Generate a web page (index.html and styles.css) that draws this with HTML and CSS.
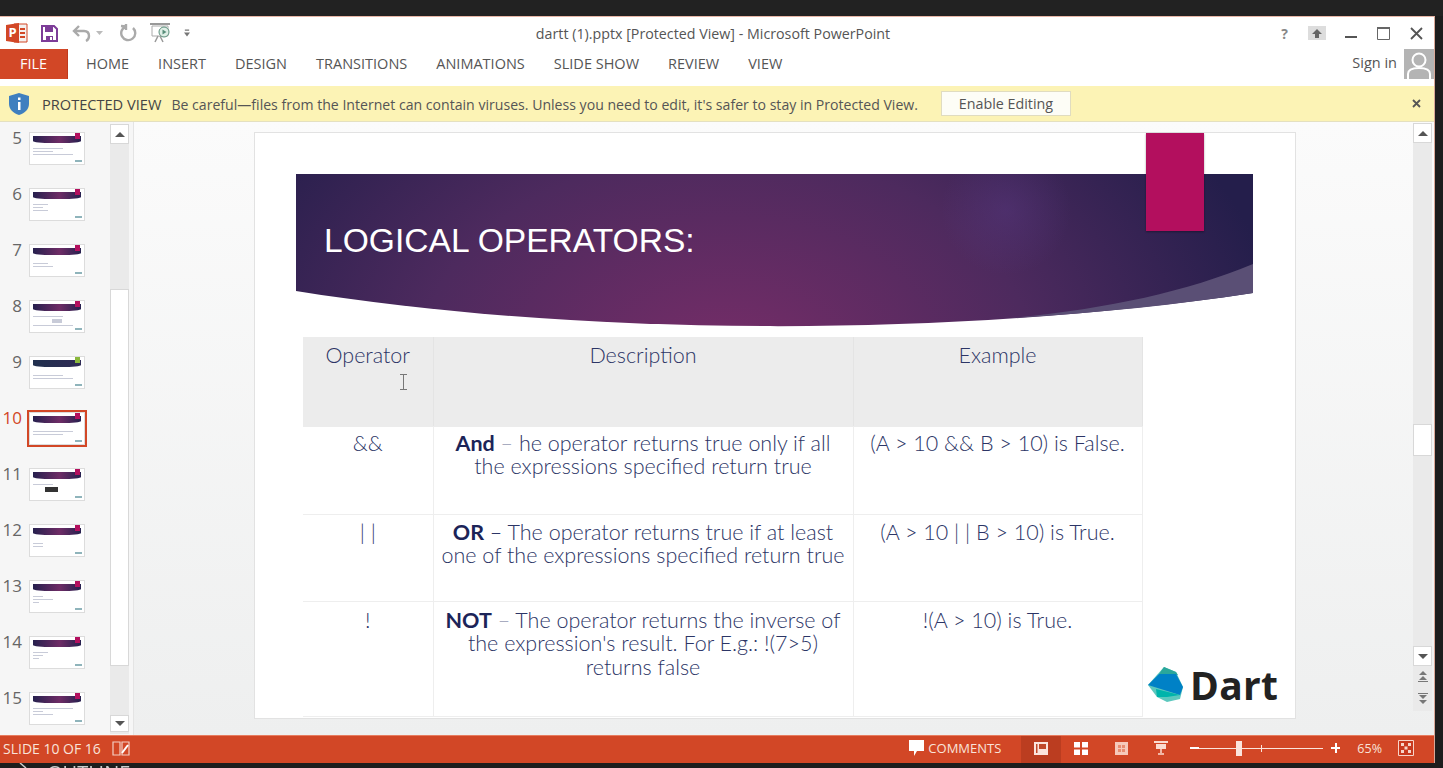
FILE: index.html
```html
<!DOCTYPE html>
<html lang="en">
<head>
  <meta charset="utf-8" />
  <title>dartt (1).pptx [Protected View] - Microsoft PowerPoint</title>
  <link rel="stylesheet" href="styles.css">
</head>
<body>
  <div class="topstrip"></div>
  <div class="window">

    <header class="titlebar">
      <div class="qat">
        <svg class="ppt-logo" width="22" height="20" viewBox="0 0 22 20"><path d="M8 1h13v18H8z" fill="#f4f0ee" stroke="#d24726"/><path d="M14 6h5M14 10h5M14 14h5" stroke="#d24726" stroke-width="2"/><path d="M0 2l13-2v20L0 18z" fill="#d24726"/><text x="2.5" y="14" class="ppt-p">P</text></svg>
        <svg class="save" width="17" height="17" viewBox="0 0 17 17"><path d="M1 1h12l3 3v12H1z" fill="#fff" stroke="#7d3c98" stroke-width="2"/><path d="M4 2h8v5H4z" fill="#7d3c98"/><path d="M5 11h7v5H5z" fill="#7d3c98"/><path d="M9 12h2v3H9z" fill="#fff"/></svg>
        <svg class="undo" width="20" height="17" viewBox="0 0 20 17"><path d="M7 1L2 6l5 5M2 6h10c4 0 5 3 5 5s-1 4-3 5" fill="none" stroke="#aaa" stroke-width="2.4"/></svg>
        <svg class="tiny" width="7" height="4" viewBox="0 0 7 4"><path d="M0 0h7L3.5 4z" fill="#bbb"/></svg>
        <svg class="redo" width="18" height="18" viewBox="0 0 18 18"><path d="M13 4a7 7 0 1 1-7-1.500M6 0v6M6 2.500L1 2" fill="none" stroke="#aaa" stroke-width="2.4"/></svg>
        <svg class="present" width="22" height="20" viewBox="0 0 22 20"><path d="M0 1h20" stroke="#999" stroke-width="2"/><path d="M2 3h16v10H2z" fill="#fff" stroke="#aaa"/><circle cx="14" cy="9" r="5" fill="#dfeee6" stroke="#5a8f7b"/><path d="M12.5 6.500l4 2.500-4 2.500z" fill="#5a8f7b"/><path d="M8 13l-3 6M10 13l3 6" stroke="#999" stroke-width="1.5"/></svg>
        <svg class="more" width="6" height="8" viewBox="0 0 7 8"><path d="M1 0h5v1.500H1zM0 3.500h7L3.500 8z" fill="#777"/></svg>
      </div>
      <div class="doc-title">dartt (1).pptx [Protected View] - Microsoft PowerPoint</div>
      <div class="winctrls">
        <span class="help">?</span>
        <svg class="ribbon-opt" width="18" height="14" viewBox="0 0 18 14"><path d="M0 0h18v14H0z" fill="#ddd"/><path d="M9 3l5 5h-3v4H7V8H4z" fill="#666"/></svg>
        <svg class="ctl-min" width="14" height="14" viewBox="0 0 14 14"><path d="M1 11h12" stroke="#555" stroke-width="2"/></svg>
        <svg class="ctl-max" width="13" height="13" viewBox="0 0 13 13"><path d="M.5 1.500h12v11H.5z" fill="none" stroke="#666"/><path d="M0 1h13" stroke="#666" stroke-width="2"/></svg>
        <svg class="ctl-close" width="13" height="13" viewBox="0 0 13 13"><path d="M1 1l11 11M12 1L1 12" stroke="#555" stroke-width="1.8"/></svg>
      </div>
    </header>

    <nav class="tabs">
      <a class="file-tab">FILE</a>
      <a>HOME</a>
      <a>INSERT</a>
      <a>DESIGN</a>
      <a>TRANSITIONS</a>
      <a>ANIMATIONS</a>
      <a>SLIDE SHOW</a>
      <a>REVIEW</a>
      <a>VIEW</a>
      <div class="account">
        <span>Sign in</span>
        <svg width="30" height="30" viewBox="0 0 30 30"><path d="M0 0h30v30H0z" fill="#b4b4b4"/><circle cx="15" cy="11" r="6.500" fill="#b4b4b4" stroke="#fff" stroke-width="2"/><path d="M4 30v-5c0-5 6-6 11-6s11 1 11 6v5" fill="#b4b4b4" stroke="#fff" stroke-width="2"/></svg>
      </div>
    </nav>

    <div class="infobar">
      <svg class="shield" width="20" height="22" viewBox="0 0 20 22"><path d="M10 0l10 3v8c0 5-4 9-10 11C4 20 0 16 0 11V3z" fill="#3f7fbf"/><path d="M9 4.500h2.500v2.500H9zM9 9h2.500v8H9z" fill="#fff"/></svg>
      <strong>PROTECTED VIEW</strong>
      <span class="info-msg">Be careful—files from the Internet can contain viruses. Unless you need to edit, it's safer to stay in Protected View.</span>
      <button class="enable">Enable Editing</button>
      <svg class="info-close" width="9" height="9" viewBox="0 0 9 9"><path d="M1 1l7 7M8 1L1 8" stroke="#555" stroke-width="1.8"/></svg>
    </div>

    <main class="workspace">
      <aside class="sidebar">
        <ol class="thumbs">
          <li><span class="num">5</span><div class="thumb"><i class="t-band"></i><i class="t-pin"></i><i class="t-line w60"></i><i class="t-line w40"></i><i class="t-line w70"></i><i class="t-logo"></i></div></li>
          <li><span class="num">6</span><div class="thumb"><i class="t-band"></i><i class="t-pin"></i><i class="t-line w30"></i><i class="t-line w20"></i><i class="t-line w30"></i><i class="t-logo"></i></div></li>
          <li><span class="num">7</span><div class="thumb"><i class="t-band"></i><i class="t-pin"></i><i class="t-line w30 gap"></i><i class="t-line w40"></i><i class="t-logo"></i></div></li>
          <li><span class="num">8</span><div class="thumb"><i class="t-band"></i><i class="t-pin"></i><i class="t-line w60"></i><i class="t-line w20 mid"></i><i class="t-line w70"></i><i class="t-logo"></i></div></li>
          <li><span class="num">9</span><div class="thumb"><i class="t-band dark"></i><i class="t-pin green"></i><i class="t-line w60 gap"></i><i class="t-line w70"></i><i class="t-logo"></i></div></li>
          <li class="current"><span class="num">10</span><div class="thumb"><i class="t-band"></i><i class="t-pin"></i><i class="t-line w70 gap"></i><i class="t-line w60"></i><i class="t-logo"></i></div></li>
          <li><span class="num">11</span><div class="thumb"><i class="t-band"></i><i class="t-pin"></i><i class="t-line w40"></i><i class="t-blob"></i><i class="t-logo"></i></div></li>
          <li><span class="num">12</span><div class="thumb"><i class="t-band"></i><i class="t-pin"></i><i class="t-line w20 gap"></i><i class="t-line w20"></i><i class="t-logo"></i></div></li>
          <li><span class="num">13</span><div class="thumb"><i class="t-band"></i><i class="t-pin"></i><i class="t-line w20"></i><i class="t-line w40"></i><i class="t-line w10"></i><i class="t-logo"></i></div></li>
          <li><span class="num">14</span><div class="thumb"><i class="t-band"></i><i class="t-pin"></i><i class="t-line w30"></i><i class="t-line w20"></i><i class="t-line w10"></i><i class="t-logo"></i></div></li>
          <li><span class="num">15</span><div class="thumb"><i class="t-band"></i><i class="t-pin"></i><i class="t-line w70"></i><i class="t-line w20"></i><i class="t-line w40"></i><i class="t-logo"></i></div></li>
        </ol>
        <div class="scrollbar side-scroll">
          <span class="sb-btn"><b class="up"></b></span>
          <span class="sb-track"><span class="sb-thumb"></span></span>
          <span class="sb-btn"><b class="down"></b></span>
        </div>
      </aside>

      <section class="canvas">
        <article class="slide">
          <div class="bookmark"></div>
          <div class="banner">
            <svg width="958" height="154" viewBox="0 0 958 154">
              <defs>
                <radialGradient id="bannerGlow" gradientUnits="userSpaceOnUse" cx="430" cy="190" r="560" gradientTransform="translate(0 60) scale(1 .7)">
                  <stop offset="0" stop-color="#772d68"/>
                  <stop offset=".55" stop-color="#4d2a5e"/>
                  <stop offset="1" stop-color="#241e4b"/>
                </radialGradient>
                <radialGradient id="bannerSpot" gradientUnits="userSpaceOnUse" cx="710" cy="36" r="65">
                  <stop offset="0" stop-color="#5a3a85" stop-opacity=".4"/>
                  <stop offset="1" stop-color="#5a3a85" stop-opacity="0"/>
                </radialGradient>
              </defs>
              <path d="M0 0H957V119C650 165 280 162 0 117Z" fill="url(#bannerGlow)"/>
              <path d="M0 0H957V119C650 165 280 162 0 117Z" fill="url(#bannerSpot)"/>
              <path d="M957 90V119C880 131 800 139 715 144C810 135 890 118 957 90Z" fill="#5a4f75"/>
            </svg>
            <h1>LOGICAL OPERATORS:</h1>
          </div>
          <table class="ops">
            <colgroup><col class="c1"><col class="c2"><col class="c3"></colgroup>
            <thead>
              <tr><th>Operator</th><th>Description</th><th>Example</th></tr>
            </thead>
            <tbody>
              <tr class="r1"><td>&amp;&amp;</td><td><b>And</b> <span class="dash">–</span> he operator returns true only if all the expressions specified return true</td><td>(A &gt; 10 &amp;&amp; B &gt; 10) is False.</td></tr>
              <tr class="r2"><td>| |</td><td><b>OR</b> – The operator returns true if at least one of the expressions specified return true</td><td>(A &gt; 10 | | B &gt; 10) is True.</td></tr>
              <tr class="r3"><td>!</td><td><b>NOT</b> <span class="dash">–</span> The operator returns the inverse of the expression's result. For E.g.: !(7&gt;5) returns false</td><td>!(A &gt; 10) is True.</td></tr>
            </tbody>
          </table>
          <svg class="ibeam" width="7" height="16" viewBox="0 0 7 16"><path d="M0 .5h7M0 15.500h7M3.500 0v16" stroke="#777"/></svg>
          <div class="dart-logo">
            <svg width="36" height="36" viewBox="0 0 36 36"><path d="M0 18L16 0l12 5 7 15-3 12-13 3-10-5z" fill="#5cc8be"/><path d="M11 7L16 0l12 5 2 3z" fill="#2aa79b"/><path d="M0 18L11 7h17l7 13-3 8z" fill="#0081c6"/><path d="M9 30l-1-8 24 6-13 2z" fill="#00b4ab"/></svg>
            <span>Dart</span>
          </div>
        </article>
      </section>

      <div class="scrollbar main-scroll">
        <span class="sb-btn"><b class="up"></b></span>
        <span class="sb-track"><span class="sb-thumb"></span></span>
        <span class="sb-btn"><b class="down"></b></span>
        <span class="sb-page">
          <svg width="10" height="11" viewBox="0 0 10 11"><path d="M5 0l4 4H1zM5 5l4 4H1zM0 10h10v1H0z" fill="#777"/></svg>
          <svg width="10" height="11" viewBox="0 0 10 11"><path d="M0 0h10v1H0zM1 2h8L5 6zM1 7h8l-4 4z" fill="#777"/></svg>
        </span>
      </div>
    </main>

    <footer class="statusbar">
      <span class="slide-count">SLIDE 10 OF 16</span>
      <svg class="notes-ico" width="18" height="15" viewBox="0 0 18 15"><path d="M1 1h7v13H1zM10 1h7v13h-7z" fill="none" stroke="#f3cfc4" stroke-width="1.2"/><path d="M10 12l6-8" stroke="#fff" stroke-width="2"/></svg>
      <div class="status-right">
        <svg class="comment-ico" width="15" height="16" viewBox="0 0 15 16"><path d="M0 0h15v11H8l-3 5v-5H0z" fill="#fff"/></svg>
        <span class="comments">COMMENTS</span>
        <span class="view-btn active"><svg width="14" height="13" viewBox="0 0 14 13"><path d="M0 0h14v13H0z" fill="#fbe4dc"/><path d="M5 2h7v5H5z" fill="#c0492a"/><path d="M2 2h1.500v9H2z" fill="#c0492a"/></svg></span>
        <span class="view-btn"><svg width="14" height="13" viewBox="0 0 14 13"><path d="M0 0h6v5.500H0zM8 0h6v5.500H8zM0 7.500h6V13H0zM8 7.500h6V13H8z" fill="#fff"/></svg></span>
        <span class="view-btn"><svg width="13" height="13" viewBox="0 0 13 13"><path d="M0 0h13v13H0z" fill="#f6c9ba"/><path d="M3 3h3v3H3zM7 7h3v3H7zM7 3h3v3H7zM3 7h3v3H3z" fill="#e88c70"/></svg></span>
        <span class="view-btn"><svg width="14" height="14" viewBox="0 0 14 14"><path d="M0 0h14v2H0zM2 3h10v5H2z" fill="#fbdcd0"/><path d="M7 8v4M4 13h6" stroke="#fbdcd0" stroke-width="1.5"/></svg></span>
        <span class="zoom-sign minus"></span>
        <span class="zoom-slider"><i class="zoom-tick"></i><i class="zoom-thumb"></i></span>
        <span class="zoom-sign plus"></span>
        <span class="zoom-pct">65%</span>
        <svg class="fit-ico" width="16" height="16" viewBox="0 0 16 16"><path d="M.5.500h15v15H.5z" fill="#c93a1e" stroke="#f7d5c9"/><path d="M3 3h3v3H3zM10 3h3v3h-3zM3 10h3v3H3zM10 10h3v3h-3zM6.500 6.500h3v3h-3z" fill="#f7d5c9"/></svg>
      </div>
    </footer>
  </div>
  <div class="underneath">
    <svg width="12" height="5" viewBox="0 0 12 5"><path d="M2 0l6 5" stroke="#ccc" stroke-width="1.5"/></svg>
    <span>OUTLINE</span>
  </div>
</body>
</html>
```

FILE: styles.css
```css
* {
  box-sizing: border-box;
}

html, body {
  height: 768px;
  overflow: hidden;
}

body {
  margin: 0;
  background: #1d1d1d;
  font-family: "Open Sans", "Liberation Sans", sans-serif;
  color: #444;
  filter: blur(0.45px);
}

.topstrip {
  height: 16px;
  background: #222;
}

.window {
  width: 1435px;
  height: 747px;
  display: flex;
  flex-direction: column;
  background: #fff;
  border-top: 1px solid #e8b6a6;
  border-right: 1px solid #d9a898;
}

/* title bar */
.titlebar {
  height: 32px;
  flex: none;
  display: grid;
  grid-template-columns: 1fr auto 1fr;
  align-items: center;
}

.qat {
  display: flex;
  align-items: center;
  padding-left: 6px;
}

.ppt-p {
  font: bold 13px "Open Sans", sans-serif;
  fill: #fff;
}

.save { margin-left: 13px; }
.undo { margin-left: 14px; }
.tiny { margin-left: 4px; }
.redo { margin-left: 17px; }
.present { margin-left: 12px; }
.more { margin-left: 12px; }

.doc-title {
  font-size: 14.25px;
  color: #555;
  padding-right: 8px;
}

.winctrls {
  display: flex;
  align-items: center;
  justify-content: flex-end;
  padding-right: 11px;
}

.help {
  font-size: 14px;
  font-weight: 700;
  color: #888;
  margin-right: 20px;
}

.ribbon-opt { margin-right: 18px; }
.ctl-min { margin-right: 19px; }
.ctl-max { margin-right: 20px; }

/* ribbon tabs */
.tabs {
  height: 37px;
  flex: none;
  display: flex;
  gap: 29px;
  font-size: 14.5px;
  color: #555;
  padding-bottom: 7px;
}

.tabs a {
  display: flex;
  align-items: center;
  height: 30px;
  padding-bottom: 2px;
}

.tabs .file-tab {
  width: 68px;
  justify-content: center;
  background: #d24726;
  color: #fff;
  margin-right: -11px;
  border-right: 1px solid #c0391c;
}

.account {
  margin-left: auto;
  display: flex;
  align-items: center;
  gap: 7px;
  height: 30px;
}

.account span {
  padding-bottom: 3px;
}

/* protected view bar */
.infobar {
  height: 36px;
  flex: none;
  display: flex;
  align-items: center;
  background: #fcf3b5;
  border-bottom: 1px solid #e4e0c0;
  padding-left: 9px;
  font-size: 14.6px;
  color: #555;
}

.infobar strong {
  font-weight: 400;
  margin-left: 13px;
  color: #444;
}

.info-msg {
  margin-left: 10px;
  padding-top: 1px;
  font-size: 14.1px;
}

.enable {
  width: 130px;
  height: 25px;
  margin-left: 23px;
  background: #fdfdf6;
  border: 1px solid #e0dcc0;
  font: inherit;
  font-size: 14.3px;
  color: #555;
}

.info-close {
  margin-left: auto;
  margin-right: 13px;
}

/* main area */
.workspace {
  flex: 1;
  min-height: 0;
  display: flex;
  background: linear-gradient(#fbfbfb, #eeefef);
  overflow: hidden;
}

.sidebar {
  width: 134px;
  flex: none;
  display: flex;
  background: #f6f6f6;
  border-right: 1px solid #e4e4e4;
  padding-top: 10px;
}

.thumbs {
  list-style: none;
  margin: 0;
  padding: 0;
  width: 110px;
  flex: none;
}

.thumbs li {
  height: 56px;
  display: flex;
  align-items: flex-start;
}

.num {
  width: 22px;
  margin-top: -4px;
  text-align: right;
  font-size: 17px;
  line-height: 20px;
  color: #666;
}

.thumb {
  position: relative;
  width: 56px;
  height: 33px;
  margin-left: 7px;
  background: #fff;
  border: 1px solid #dcdcdc;
  display: flex;
  flex-direction: column;
  align-items: flex-start;
  gap: 2px;
  padding: 3px 3px 0;
}

.t-band {
  width: 48px;
  height: 7px;
  flex: none;
  background: linear-gradient(90deg, #26204e, #6e2c66 55%, #26204e);
  border-radius: 0 0 40% 40% / 0 0 30% 30%;
  margin-bottom: 3px;
}

.t-band.dark {
  background: linear-gradient(90deg, #20304e, #2f2a55);
}

.t-pin {
  position: absolute;
  top: 0;
  right: 4px;
  width: 5px;
  height: 6px;
  background: #b30f5e;
}

.t-pin.green {
  background: #8ab83c;
}

.t-line {
  height: 1px;
  flex: none;
  background: #c8cbd8;
}

.t-line.gap { margin-top: 3px; }
.t-line.mid { align-self: center; height: 4px; }
.w10 { width: 6px; }
.w20 { width: 10px; }
.w30 { width: 15px; }
.w40 { width: 20px; }
.w60 { width: 30px; }
.w70 { width: 40px; }

.t-blob {
  width: 13px;
  height: 5px;
  margin-left: 12px;
  background: #333;
}

.t-logo {
  position: absolute;
  right: 2px;
  bottom: 2px;
  width: 7px;
  height: 2px;
  background: #8fb4bb;
}

.current .num {
  color: #d24726;
}

.current .thumb {
  outline: 2px solid #d24726;
}

/* scrollbars */
.scrollbar {
  width: 19px;
  flex: none;
  display: flex;
  flex-direction: column;
  background: #eaeaea;
}

.side-scroll {
  height: 610px;
  margin-right: 4px;
  padding-bottom: 2px;
  position: relative;
  top: -8px;
}

.side-scroll .sb-btn:last-child {
  height: 17px;
}

.main-scroll {
  margin: 1px 2px 0 0;
  height: 588px;
}

.sb-btn {
  height: 20px;
  flex: none;
  background: #fff;
  border: 1px solid #d8d8d8;
  display: flex;
  align-items: center;
  justify-content: center;
}

.sb-btn b {
  width: 0;
  height: 0;
  border-left: 5px solid transparent;
  border-right: 5px solid transparent;
}

.sb-btn .up { border-bottom: 5px solid #555; }
.sb-btn .down { border-top: 5px solid #555; }

.sb-track {
  flex: 1;
  display: block;
  min-height: 0;
}

.side-scroll .sb-thumb {
  display: block;
  height: 377px;
  margin-top: 145px;
  background: #fff;
  border: 1px solid #d8d8d8;
}

.main-scroll .sb-thumb {
  display: block;
  height: 32px;
  margin-top: 281px;
  background: #fff;
  border: 1px solid #d8d8d8;
}

.main-scroll .sb-page {
  display: flex;
  flex-direction: column;
  align-items: center;
  gap: 11px;
  padding: 5px 0 7px;
}

/* slide */
.canvas {
  flex: 1;
  min-width: 0;
  padding: 10px 0 0 120px;
}

.slide {
  position: relative;
  width: 1042px;
  height: 587px;
  background: #fff;
  border: 1px solid #e2e2e2;
  padding: 41px 0 0 41px;
}

.banner {
  position: relative;
  height: 163px;
}

.banner svg {
  display: block;
}

.banner h1 {
  position: absolute;
  top: 48px;
  left: 28px;
  margin: 0;
  font: 400 33.6px "Liberation Sans", sans-serif;
  color: #fff;
}

.bookmark {
  position: absolute;
  z-index: 1;
  top: 0;
  left: 891px;
  width: 58px;
  height: 98px;
  background: #b30f5e;
  box-shadow: 0 1px 2px rgba(0, 0, 0, 0.35);
}

.ibeam {
  position: absolute;
  top: 241px;
  left: 145px;
}

/* operators table */
.ops {
  border-collapse: collapse;
  table-layout: fixed;
  width: 839px;
  margin-left: 7px;
  font-family: "Lato", "Open Sans", sans-serif;
  font-size: 21.5px;
  line-height: 23.5px;
  color: #2c3566;
  text-align: center;
}

.c1 { width: 130px; }
.c2 { width: 420px; }
.c3 { width: 289px; }

.ops th, .ops td {
  padding: 7px 7px 0;
  vertical-align: top;
  font-weight: 300;
  border: 1px solid #eeeeee;
  border-top: 0;
  border-bottom: 1px solid #eeeeee;
}

.ops th {
  height: 89px;
  background: #ececec;
  border-color: #e4e4e4;
  border-bottom-color: #ececec;
}

.ops td:first-child, .ops th:first-child {
  border-left: 0;
}

.r1 td { height: 88px; padding-top: 5px; }
.r2 td { height: 87px; padding-top: 6px; }
.r3 td { height: 115px; }

.ops b {
  font-weight: 700;
  color: #1c2458;
}

.dash {
  color: #a8acc0;
}

.dart-logo {
  position: absolute;
  left: 893px;
  top: 533px;
  display: flex;
  align-items: center;
  gap: 6px;
  font-family: "Open Sans", sans-serif;
  font-weight: 700;
  font-size: 39px;
  line-height: 38px;
  color: #222;
  letter-spacing: 0.3px;
}

/* status bar */
.statusbar {
  height: 28px;
  flex: none;
  display: flex;
  align-items: center;
  background: #d24726;
  border-top: 1px solid #e77c5f;
  color: #f9e3da;
  font-size: 13px;
  padding-left: 3px;
}

.statusbar > *, .status-right > * {
  margin-bottom: 3px;
}

.slide-count {
  font-size: 14px;
}

.notes-ico {
  margin-left: 11px;
}

.statusbar .status-right {
  margin-left: auto;
  margin-bottom: 0;
  display: flex;
  align-items: center;
  height: 100%;
  padding-right: 20px;
}

.comments {
  margin-left: 4px;
  margin-right: 20px;
}

.status-right .view-btn {
  width: 40px;
  height: 100%;
  margin-bottom: 0;
  padding-bottom: 3px;
  display: flex;
  align-items: center;
  justify-content: center;
}

.view-btn.active {
  background: #bb3d20;
}

.zoom-sign {
  position: relative;
  width: 10px;
  height: 10px;
  margin-left: 8px;
}

.zoom-sign::before {
  content: "";
  position: absolute;
  top: 4px;
  left: 1px;
  width: 9px;
  height: 2px;
  background: #fff;
}

.zoom-sign.plus::after {
  content: "";
  position: absolute;
  top: 0;
  left: 4.5px;
  width: 2px;
  height: 10px;
  background: #fff;
}

.zoom-sign.plus {
  margin-left: 7px;
}

.zoom-slider {
  position: relative;
  width: 124px;
  height: 1px;
  background: #fbe4dc;
}

.zoom-thumb {
  position: absolute;
  top: -7px;
  left: 37px;
  width: 6px;
  height: 15px;
  background: #fbe4dc;
}

.zoom-tick {
  position: absolute;
  top: -3px;
  left: 62px;
  width: 1px;
  height: 7px;
  background: #fbe4dc;
}

.zoom-pct {
  margin-left: 17px;
  font-size: 12.5px;
}

.fit-ico {
  margin-left: 16px;
}

/* whatever sits under the window */
.underneath {
  height: 5px;
  overflow: hidden;
  display: flex;
  align-items: flex-start;
  padding-left: 18px;
  gap: 17px;
  font-size: 20px;
  line-height: 20px;
  color: #ccc;
}
```
